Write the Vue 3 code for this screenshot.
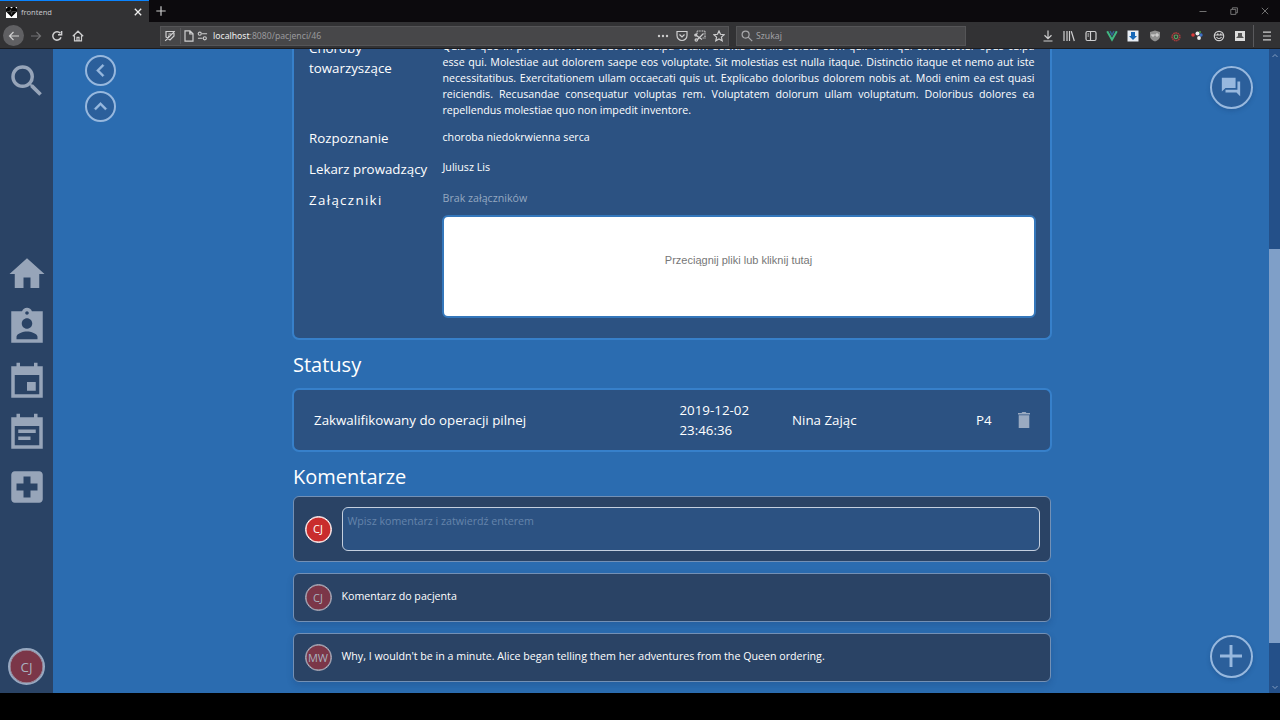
<script setup>
const choroby = [
  'Quia a quo in provident nemo aut sunt culpa totam debitis aut illo soluta eum qui. Velit qui consectetur opus culpa',
  'esse qui. Molestiae aut dolorem saepe eos voluptate. Sit molestias est nulla itaque. Distinctio itaque et nemo aut iste',
  'necessitatibus. Exercitationem ullam occaecati quis ut. Explicabo doloribus dolorem nobis at. Modi enim ea est quasi',
  'reiciendis. Recusandae consequatur voluptas rem. Voluptatem dolorum ullam voluptatum. Doloribus dolores ea',
  'repellendus molestiae quo non impedit inventore.'
]
const comments = [
  { who: 'CJ', text: 'Komentarz do pacjenta' },
  { who: 'MW', text: "Why, I wouldn't be in a minute. Alice began telling them her adventures from the Queen ordering." }
]
const nav = [
  'M10 20v-6h4v6h5v-8h3L12 3 2 12h3v8z',
  'M21 3h-6.18C14.4 1.84 13.3 1 12 1s-2.4.84-2.82 2H3v18h18V3zm-9 0c.55 0 1 .45 1 1s-.45 1-1 1-1-.45-1-1 .45-1 1-1zm0 4c1.66 0 3 1.34 3 3s-1.34 3-3 3-3-1.34-3-3 1.34-3 3-3zm6 12H6v-1.4c0-2 4-3.1 6-3.1s6 1.1 6 3.1z',
  'M17 12h-5v5h5v-5zM16 1v2H8V1H6v2H3v18h18V3h-3V1zm3 18H5V8h14z',
  'M17 10H7v2h10v-2zM21 3h-3V1h-2v2H8V1H6v2H3v18h18V3zm-2 16H5V8h14zm-5-5H7v2h7z',
  'M19 3H5c-1.1 0-1.99.9-1.99 2L3 19c0 1.1.9 2 2 2h14c1.1 0 2-.9 2-2V5c0-1.1-.9-2-2-2zm-1 11h-4v4h-4v-4H6v-4h4V6h4v4h4z'
]
</script>

<template>
  <div class="screen">
    <div class="tabs">
      <div class="tab">
        <svg class="fav" viewBox="0 0 12 12"><path fill="#fff" d="M0 0h12v12H0z" /><path fill="#050505" d="M6 11 0 5V2l2-2h2.500L6 1.500 7.500 0H10l2 2v3z" /><path stroke="#777" stroke-width=".6" fill="none" d="M1 5h3l1-2 1 5 1-3h4" /></svg>
        <span>frontend</span>
        <svg class="tab-x" viewBox="0 0 8 8"><path d="m.8.8 6.4 6.4m0-6.4L.8 7.2" stroke="#eee" stroke-width="1.3" /></svg>
      </div>
      <svg class="newtab" viewBox="0 0 10 10"><path d="M5 .3v9.4M.3 5h9.4" stroke="#ccc" stroke-width="1.2" /></svg>
      <div class="win">
        <svg viewBox="0 0 8 8"><path d="M.5 4.5h7" /></svg>
        <svg viewBox="0 0 8 8"><path d="M.8 2.4h5v5h-5zM2.4 2.2V.8h5v5H6" /></svg>
        <svg viewBox="0 0 8 8"><path d="m.8.8 6.4 6.4m0-6.4L.8 7.2" /></svg>
      </div>
    </div>

    <div class="toolbar">
      <div class="left-tools">
        <span class="back"><svg viewBox="0 0 12 12"><path d="M11 6H1.5M5.5 2l-4 4 4 4" /></svg></span>
        <svg class="dim" viewBox="0 0 12 12"><path d="M1 6h9.5M6.5 2l4 4-4 4" /></svg>
        <svg viewBox="0 0 12 12"><path stroke-width="1.500" d="M10 7.2A4.2 4.2 0 1 1 9.3 3.300M10.600 1v3.800H7" /></svg>
        <svg viewBox="0 0 12 12"><path d="M.8 6.200 6 1.200l5.200 5M2.500 5.500v5.400h7V5.500M5 10.500V7.300h2v3.200" /></svg>
      </div>
      <div class="url">
        <svg viewBox="0 0 12 12"><path d="M2 1.500h8V6L6 10 2 7zM1.200 10.800 10.800 1.200M4.500 4h3M4 6.200h2" /></svg>
        <i class="sep"></i>
        <svg class="page" viewBox="0 0 12 12"><path d="M2 .8h5l3 3v7.400H2zM6.800 1v3H10" /></svg>
        <svg class="perm" viewBox="0 0 12 12"><path d="M5.500 3.500H11M1 8.500h5" /><circle cx="3" cy="3.500" r="1.700" /><circle cx="8.500" cy="8.500" r="1.700" /></svg>
        <span class="addr"><b>localhost</b>:8080/pacjenci/46</span>
        <svg class="dots" viewBox="0 0 12 12"><g fill="#ccc" stroke="none"><circle cx="2" cy="6" r="1.200" /><circle cx="6" cy="6" r="1.200" /><circle cx="10" cy="6" r="1.200" /></g></svg>
        <svg viewBox="0 0 12 12"><path d="M1 1.500h10v4a5 5 0 0 1-10 0zM3.500 4.500 6 7l2.500-2.500" /></svg>
        <svg viewBox="0 0 12 12"><path stroke-dasharray="1 .6" d="M3 4V1h8v7H8" /><path d="m3.500 9.500 6-6M1 4.500l7 5" /><circle cx="2.300" cy="10" r="1.200" /><circle cx="1.800" cy="5" r="1" /></svg>
        <svg viewBox="0 0 12 12"><path d="m6 1 1.500 3.300 3.600.4-2.700 2.400.8 3.600L6 8.900l-3.200 1.800.8-3.600L.9 4.700l3.600-.4z" /></svg>
      </div>
      <div class="search">
        <svg viewBox="0 0 12 12"><circle cx="4.600" cy="4.600" r="3.500" /><path d="m7.200 7.200 4 4" /></svg>
        <span>Szukaj</span>
      </div>
      <div class="exts">
        <svg viewBox="0 0 12 12"><path d="M6 .5v8M2.500 5.300 6 8.700l3.500-3.400M1.500 11h9" /></svg>
        <svg viewBox="0 0 12 12"><path d="M1 1v10M4 1v10M6.500 1v10M8.300 1.300l3 9.700" /></svg>
        <svg viewBox="0 0 12 12"><rect x="1" y="1.500" width="10" height="9" rx="1.500" /><path d="M5.500 2v8M2.500 4H4M2.500 6H4" /></svg>
        <svg viewBox="0 0 12 12"><path stroke="#41b883" stroke-width="2" d="m1.200 1.200 4.800 8.600 4.800-8.600" /><path stroke="#34608f" stroke-width="1.500" d="M4 1.200 6 5l2-3.800" /></svg>
        <svg viewBox="0 0 12 12"><path stroke="none" fill="#e8eef5" d="M.5.5h11v11H.5z" /><path stroke="none" fill="#1668b8" d="M4 2h4v4h2L6 10 2 6h2z" /></svg>
        <svg viewBox="0 0 12 12"><path stroke="none" fill="#909090" d="m6 .5 5 1.500v4c0 3-2.500 4.500-5 5.500-2.500-1-5-2.500-5-5.500V2z" /><path stroke="#eee" d="M3 4v2h2V4M7 4h2v2H7z" stroke-width=".8" /></svg>
        <svg viewBox="0 0 12 12"><circle cx="6" cy="6.800" r="3.800" stroke="#a33c3c" stroke-width="1.800" stroke-dasharray="1.500 .6" /><circle cx="6" cy="6.800" r="1.800" stroke="#58a464" /></svg>
        <svg viewBox="0 0 12 12"><g stroke="none"><circle cx="2" cy="5" r="1.800" fill="#d93a3a" /><circle cx="6.500" cy="3.500" r="2" fill="#eee" /><circle cx="10" cy="5" r="1.700" fill="#3c70c4" /><circle cx="8" cy="8" r="1.900" fill="#eee" /><circle cx="9" cy="2" r="1" fill="#4aa550" /></g></svg>
        <svg viewBox="0 0 12 12"><circle cx="6" cy="6" r="4.700" /><path d="M2 5h8M3.500 7c1 2 4 2 5 0M4 4h1.500M7 4h1.500" /></svg>
        <svg viewBox="0 0 12 12"><path stroke="none" fill="#ddd" d="M1 1h10v10H1z" /><path stroke="none" fill="#555" d="M4 3h4v3l2 2H2l2-2z" /></svg>
        <i class="sep"></i>
        <svg class="menu" viewBox="0 0 12 12"><path d="M2 2.200h8M2 6h8M2 9.800h8" /></svg>
      </div>
    </div>

    <div class="app">
      <nav class="side">
        <svg class="find" viewBox="0 0 24 24"><path d="M15.500 14h-.79l-.28-.27A6.471 6.471 0 0 0 16 9.500 6.500 6.500 0 1 0 9.500 16c1.610 0 3.090-.59 4.230-1.570l.27.28v.79l5 4.990L20.490 19zm-6 0C7.010 14 5 11.990 5 9.500S7.010 5 9.500 5 14 7.010 14 9.500 11.990 14 9.500 14z" /></svg>
        <div class="navicons">
          <svg v-for="d in nav" :key="d" viewBox="0 0 24 24"><path fill-rule="evenodd" :d="d" /></svg>
        </div>
        <div class="avatar me">CJ</div>
      </nav>

      <div class="leftcol">
        <button class="round small"><svg viewBox="0 0 24 24"><path d="M15.410 7.410 14 6l-6 6 6 6 1.410-1.410L10.830 12z" /></svg></button>
        <button class="round small"><svg viewBox="0 0 24 24"><path d="m12 8-6 6 1.410 1.410L12 10.830l4.590 4.580L18 14z" /></svg></button>
      </div>

      <main>
        <section class="card">
          <div class="row">
            <div class="label">Choroby towarzyszące</div>
            <div class="value"><div v-for="(l, i) in choroby" :key="i" class="line" :class="{ last: i === 4 }">{{ l }}</div></div>
          </div>
          <div class="row"><div class="label">Rozpoznanie</div><div class="value">choroba niedokrwienna serca</div></div>
          <div class="row"><div class="label">Lekarz prowadzący</div><div class="value">Juliusz Lis</div></div>
          <div class="row">
            <div class="label wide">Załączniki</div>
            <div class="value"><div class="none">Brak załączników</div><div class="drop">Przeciągnij pliki lub kliknij tutaj</div></div>
          </div>
        </section>

        <h2 class="h-status">Statusy</h2>
        <section class="status">
          <span class="s-name">Zakwalifikowany do operacji pilnej</span>
          <span class="s-date">2019-12-02<br />23:46:36</span>
          <span class="s-who">Nina Zając</span>
          <span class="s-p">P4</span>
          <svg viewBox="0 0 12 16"><path d="M.7 3.200h10.600V16H.7zM0 1h3.500l.9-1h3.200l.9 1H12v1.500H0z" /></svg>
        </section>

        <h2 class="h-com">Komentarze</h2>
        <section class="comment write">
          <div class="avatar bright">CJ</div>
          <div class="input">Wpisz komentarz i zatwierdź enterem</div>
        </section>
        <section v-for="c in comments" :key="c.who" class="comment">
          <div class="avatar">{{ c.who }}</div>
          <p>{{ c.text }}</p>
        </section>
      </main>

      <div class="rightcol">
        <button class="round big"><svg class="chat" viewBox="0 0 24 24"><path d="M21 6h-2v9H6v3h12l4 4V6zm-4 7V2H2v15l4-4z" /></svg></button>
        <button class="round big"><svg class="plus" viewBox="0 0 24 24"><path d="M10.400 0h3.200v10.400H24v3.200H13.600V24h-3.200V13.600H0v-3.200h10.400z" /></svg></button>
      </div>
      <div class="scroll">
        <svg viewBox="0 0 8 8"><path d="m1.500 5 2.500-2.500L6.500 5" /></svg>
        <i class="thumb"></i>
        <svg class="down" viewBox="0 0 8 8"><path d="M1.500 3 4 5.500 6.500 3" /></svg>
      </div>
    </div>
  </div>
</template>

<style>
body { background: #000; overflow: hidden; }
</style>

<style scoped>
* { box-sizing: border-box; }
.screen { width: 1280px; height: 720px; background: #000; overflow: hidden; font-family: "Noto Sans", "Open Sans", sans-serif; color: #fff; display: flex; flex-direction: column; }
svg { display: block; flex: none; }
.tabs { height: 22px; background: #0c0a0d; display: flex; align-items: center; }
.tab { width: 149px; height: 22px; background: #323234; border-top: 1.500px solid #0a84ff; display: flex; align-items: center; padding: 1px 7px 0 6px; font-size: 7.500px; color: #c4c4c8; }
.fav { width: 11px; height: 11px; margin-right: 4px; }
.tab-x { width: 8px; height: 8px; margin-left: auto; }
.newtab { width: 10px; height: 10px; margin-left: 7px; }
.win { margin-left: auto; display: flex; gap: 23px; margin-right: 11px; }
.win svg { width: 8px; height: 8px; fill: none; stroke: #8b8b8b; stroke-width: .8; }
.toolbar { height: 27px; background: #323234; border-bottom: 1px solid #1b1c20; display: flex; align-items: center; padding-top: 1px; }
.toolbar svg { width: 12px; height: 12px; fill: none; stroke: #cfcfd0; stroke-width: 1.2; }
.left-tools { display: flex; align-items: center; width: 160px; padding-left: 3px; gap: 10px; }
.left-tools > svg { margin-right: -1px; }
.back { width: 21px; height: 21px; margin-right: -4px; border-radius: 50%; background: #606063; display: grid; place-items: center; }
.toolbar svg.dim { stroke: #717174; }
.url { width: 569px; height: 20px; background: #474749; border: 1px solid #555557; display: flex; align-items: center; padding: 0 3px; font-size: 8.670px; color: #99999c; }
.url svg { margin-left: 6.700px; width: 12px; height: 12px; }
.url svg:first-child { margin-left: 0; }
.url .sep { margin-left: 4px; height: 16px; }
.url .page { margin-left: 2px; }
.url .perm { margin-left: 2px; width: 11px; }
.addr { margin-left: 5px; margin-right: auto; }
.addr b { font-weight: 400; color: #eee; }
.sep { width: 1px; height: 22px; background: #5a5a5d; }
.search { width: 230px; height: 20px; margin-left: 7px; background: #474749; border: 1px solid #555557; display: flex; align-items: center; gap: 3px; padding-left: 4px; font-size: 8.670px; color: #a2a2a6; }
.toolbar .search svg { stroke: #a8a8ab; }
.exts { margin-left: auto; padding-right: 7px; display: flex; align-items: center; gap: 9.350px; }
.exts .sep { margin-left: -2.400px; margin-right: -2.400px; }

.app { height: 644px; background: #2b6cb0; display: flex; overflow: hidden; font-family: "Open Sans", "Noto Sans", sans-serif; }
.side { width: 53px; background: #2a4365; display: flex; flex-direction: column; align-items: center; flex: none; }
.side svg { fill: #97a5b9; }
.find { width: 42px; height: 42px; margin-top: 11px; }
.navicons { display: flex; flex-direction: column; gap: 11.300px; margin-top: 150.500px; }
.navicons svg { width: 42px; height: 42px; }
.navicons svg:nth-child(3) { margin-top: 1.500px; margin-bottom: -1.500px; }
.avatar { border-radius: 50%; display: flex; align-items: center; justify-content: center; background: #7b3648; color: #a9b1bf; border: 1px solid #a9b1bf; box-shadow: inset 0 0 0 .5px #a9b1bf; flex: none; width: 27px; height: 27px; font-size: 11px; }
.me { width: 37px; height: 37px; font-size: 13.330px; margin-top: auto; margin-bottom: 8px; border: 2px solid #97a8c0; }
.leftcol { width: 239px; padding: 5.500px 0 0 32px; display: flex; flex-direction: column; gap: 5px; flex: none; }
.round { padding: 0; border-radius: 50%; display: grid; place-items: center; background: #2b5f9b; border: 2px solid #97b8de; }
.round svg { fill: #97b8de; }
.small { width: 31px; height: 31px; }
.small svg { width: 25px; height: 25px; stroke: #97b8de; stroke-width: .4; }
.big { width: 43px; height: 43px; box-shadow: 0 2px 4px rgba(20, 50, 100, .25); }
.chat { width: 22px; height: 22px; }
.plus { width: 22px; height: 22px; }

main { width: 760px; flex: none; display: flex; flex-direction: column; }
.card { height: 290.500px; flex: none; background: #2c5282; border: 2px solid #3780ca; border-top: 0; border-radius: 0 0 7px 7px; padding: 0 15px; display: flex; flex-direction: column; gap: 10.670px; overflow: hidden; }
.card .row:first-child { margin-top: -11px; }
.row { display: flex; flex: none; }
.label { width: 133.500px; font-size: 13.330px; line-height: 20px; flex: none; padding-right: 10px; margin: -.400px 0 .400px; }
.row:nth-child(3) .label { padding-right: 0; }
.wide { letter-spacing: 1.330px; }
.value { width: 592px; font-size: 10.670px; line-height: 16px; }
.line { text-align: justify; text-align-last: justify; height: 16px; }
.last { text-align-last: left; }
.none { color: #95a8c0; }
.drop { margin-top: 9px; margin-left: -1px; width: 594px; height: 103px; border: 2px solid #3477bb; border-radius: 6px; background: #fff; color: #777; font: 11px/16px "Liberation Sans", sans-serif; text-align: center; padding-top: 35px; }
h2 { margin: 0; padding-left: 1px; font-size: 20px; font-weight: 400; line-height: 30px; }
.h-status { margin-top: 10px; }
.status { height: 64px; margin-top: 8.500px; flex: none; background: #2c5282; border: 2px solid #3780ca; border-radius: 7px; display: flex; align-items: center; font-size: 13.330px; line-height: 20px; padding: 0 20px; }
.s-name { width: 365.500px; }
.s-date { width: 112.500px; }
.s-who { width: 184px; }
.s-p { width: 42px; }
.status svg { width: 12px; height: 16px; fill: #9aaac1; }
.h-com { margin-top: 10px; }
.comment { margin: 0 1px 10.670px; height: 49.330px; flex: none; background: #2a4365; border: 1px solid #7390b5; border-radius: 6px; padding: 0 10.500px; display: flex; align-items: center; gap: 10px; font-size: 10.670px; line-height: 16px; box-shadow: 0 3px 6px rgba(20, 50, 100, .22); }
.comment.write { margin-top: 4.300px; height: 66px; box-shadow: none; }
.comment p { margin: 0 0 2.500px; }
.bright { background: #c92d2d; color: #fff; border-color: #fff; box-shadow: inset 0 0 0 .5px #fff; }
.input { flex: 1; height: 44px; background: #2c5282; border: 1px solid #c4cfde; border-radius: 6px; padding: 5px; color: #6584ab; }
.rightcol { flex: 1; display: flex; flex-direction: column; justify-content: space-between; align-items: flex-end; padding: 16.500px 16.500px 15.500px 0; }
.scroll { width: 11px; background: #245089; display: flex; flex-direction: column; align-items: center; padding: 3px 0 2px; }
.scroll svg { width: 8px; height: 8px; fill: none; stroke: #829dc0; }
.thumb { width: 11px; height: 394px; background: #7f9fc8; margin-top: 189px; }
.down { margin-top: auto; }
</style>
